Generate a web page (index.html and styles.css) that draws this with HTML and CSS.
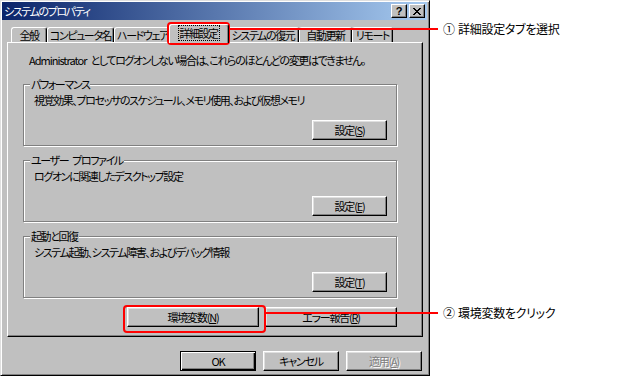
FILE: index.html
```html
<!DOCTYPE html>
<html lang="ja">
<head>
    <meta charset="UTF-8">
    <meta name="viewport" content="width=device-width, initial-scale=1.0">
    <title>システムのプロパティ</title>
    <link rel="stylesheet" href="styles.css">
</head>
<body>
<div class="page">

    <div class="dialog">
        <div class="titlebar">
            <span class="title">システムのプロパティ</span>
            <div class="caption-buttons">
                <span class="caption-btn help">?</span>
                <span class="caption-btn close">
                    <svg width="8" height="7" viewBox="0 0 8 7"><path d="M0 0 L7 7 M1 0 L8 7 M7 0 L0 7 M8 0 L1 7" stroke="#000" stroke-width="1" fill="none"/></svg>
                </span>
            </div>
        </div>

        <div class="tabs">
            <span class="tab tab-general">全般</span>
            <span class="tab tab-computer">コンピュータ名</span>
            <span class="tab tab-hardware">ハードウェア</span>
            <span class="tab tab-advanced selected"><span class="focus">詳細設定</span></span>
            <span class="tab tab-restore">システムの復元</span>
            <span class="tab tab-update">自動更新</span>
            <span class="tab tab-remote">リモート</span>
        </div>

        <div class="panel">
            <p class="note"><span class="latin">Administrator</span> としてログオンしない場合は、これらのほとんどの変更はできません。</p>

            <div class="group">
                <div class="group-title">パフォーマンス</div>
                <p class="group-text">視覚効果、プロセッサのスケジュール、メモリ使用、および仮想メモリ</p>
                <div class="group-actions"><button class="btn">設定(<u>S</u>)</button></div>
            </div>

            <div class="group">
                <div class="group-title">ユーザー プロファイル</div>
                <p class="group-text">ログオンに関連したデスクトップ設定</p>
                <div class="group-actions"><button class="btn">設定(<u>E</u>)</button></div>
            </div>

            <div class="group">
                <div class="group-title">起動と回復</div>
                <p class="group-text">システム起動、システム障害、およびデバッグ情報</p>
                <div class="group-actions"><button class="btn">設定(<u>T</u>)</button></div>
            </div>

            <div class="panel-actions">
                <button class="btn wide">環境変数(<u>N</u>)</button>
                <button class="btn wide">エラー報告(<u>R</u>)</button>
            </div>
        </div>

        <div class="footer">
            <button class="btn default">OK</button>
            <button class="btn">キャンセル</button>
            <button class="btn" disabled>適用(<u>A</u>)</button>
        </div>
    </div>

    <!-- 注釈 -->
    <div class="callout callout-tab">
        <div class="mark"></div>
        <div class="lead"><span class="line"></span><span class="callout-text">① 詳細設定タブを選択</span></div>
    </div>
    <div class="callout callout-env">
        <div class="mark"></div>
        <div class="lead"><span class="line"></span><span class="callout-text">② 環境変数をクリック</span></div>
    </div>

</div>
</body>
</html>
```

FILE: styles.css
```css
body {
    margin: 0;
    background: #fff;
    font-family: "Noto Sans CJK JP", sans-serif;
    font-size: 11px;
    letter-spacing: -1.4px;
    word-spacing: 3px;
    font-feature-settings: "palt" 1;
    color: #000;
}
p {
    margin: 0;
}
.latin {
    letter-spacing: -1px;
}
.page {
    position: relative;
    width: 630px;
    height: 378px;
}

/* ダイアログ */
.dialog {
    box-sizing: border-box;
    width: 430px;
    height: 376px;
    background: #c0c0c0;
    border: 1px solid;
    border-color: #dfdfdf #000 #000 #dfdfdf;
    box-shadow: inset 1px 1px #fff, inset -1px -1px #808080;
    padding: 1px 2px 2px 1px;
    display: flex;
    flex-direction: column;
}
.titlebar {
    height: 18px;
    flex: none;
    display: flex;
    align-items: center;
    justify-content: space-between;
    padding: 0 2px 0 2px;
    background: linear-gradient(to right, #0a246a, #a6caf0);
    color: #fff;
    line-height: 16px;
}
.caption-buttons {
    display: flex;
    gap: 2px;
}
.caption-btn {
    box-sizing: border-box;
    width: 16px;
    height: 14px;
    background: #c0c0c0;
    border: 1px solid;
    border-color: #fff #000 #000 #fff;
    box-shadow: inset -1px -1px #808080;
    display: flex;
    align-items: center;
    justify-content: center;
    color: #000;
    font: bold 11px "Liberation Sans", sans-serif;
    letter-spacing: 0;
}

/* タブ */
.tabs {
    flex: none;
    height: 18px;
    margin-top: 4px;
    padding-left: 9px;
    display: flex;
    align-items: flex-end;
}
.tab {
    box-sizing: border-box;
    height: 15px;
    border: 1px solid;
    border-bottom: 0;
    border-color: #fff #000 transparent #fff;
    border-radius: 3px 3px 0 0;
    box-shadow: inset -1px 0 #808080;
    text-align: center;
    line-height: 14px;
    white-space: nowrap;
    flex: none;
}
.tab-general { width: 36px; }
.tab-computer { width: 67px; }
.tab-hardware { width: 57px; }
.tab-advanced { width: 60px; }
.tab-restore { width: 72px; }
.tab-update { width: 53px; }
.tab-remote { width: 41px; }
.tab.selected {
    position: relative;
    z-index: 1;
    align-self: flex-start;
    height: 19px;
    margin: 0 -2px;
    background: #c0c0c0;
    line-height: 17px;
}
.focus {
    outline: 1px dotted #000;
    outline-offset: -1px;
    padding: 0 2px 0 1px;
}

/* パネル */
.panel {
    box-sizing: border-box;
    margin: 0 4px 0 5px;
    border: 1px solid;
    border-color: #fff #000 #000 #fff;
    box-shadow: inset -1px -1px #808080;
    padding: 9px 25px 9px 15px;
    display: flex;
    flex-direction: column;
}
.note {
    margin-left: 6px;
    line-height: 16px;
    white-space: nowrap;
}
.group {
    box-sizing: border-box;
    height: 62px;
    margin-top: 14px;
    border: 1px solid #808080;
    box-shadow: inset 1px 1px #fff, 1px 1px #fff;
    padding: 0 9px 5px 6px;
    display: flex;
    flex-direction: column;
}
.note + .group {
    margin-top: 16px;
}
.group-title {
    align-self: flex-start;
    margin-top: -9px;
    padding: 0 1px;
    background: #c0c0c0;
    line-height: 16px;
}
.group-text {
    margin-left: 4px;
    line-height: 16px;
    white-space: nowrap;
}
.group-actions {
    margin-top: 12px;
    display: flex;
    justify-content: flex-end;
}
.panel-actions {
    margin-top: 9px;
    display: flex;
    justify-content: flex-end;
    gap: 6px;
}

/* ボタン */
.btn {
    box-sizing: border-box;
    width: 75px;
    height: 20px;
    padding: 0;
    font-family: inherit;
    font-size: 11px;
    letter-spacing: -1.2px;
    font-feature-settings: "palt" 1;
    line-height: 16px;
    color: #000;
    background: #c0c0c0;
    border: 1px solid;
    border-color: #fff #000 #000 #fff;
    box-shadow: inset -1px -1px #808080, inset 1px 1px #dfdfdf;
}
.btn.wide {
    width: 132px;
}
.btn.default {
    border-color: #000;
    box-shadow: inset 1px 1px #fff, inset -1px -1px #000, inset -2px -2px #808080;
}
.btn:disabled {
    color: #808080;
    text-shadow: 1px 1px #fff;
}
.footer {
    margin-top: 14px;
    padding-right: 5px;
    display: flex;
    justify-content: flex-end;
    gap: 7px;
}
.footer .btn {
    width: 76px;
}

/* 注釈 */
.callout {
    position: absolute;
    display: flex;
    align-items: flex-start;
}
.mark {
    box-sizing: border-box;
    border: 2px solid #f00;
    border-radius: 4px;
}
.lead {
    display: flex;
    align-items: center;
    height: 16px;
}
.line {
    height: 2px;
    background: #f00;
}
.callout-text {
    margin-left: 5px;
    font-size: 12px;
    letter-spacing: -0.3px;
    word-spacing: 1px;
    line-height: 16px;
    white-space: nowrap;
}
.callout-tab {
    left: 167px;
    top: 22px;
}
.callout-tab .mark {
    width: 63px;
    height: 23px;
}
.callout-tab .lead {
    margin-top: -1px;
}
.callout-tab .line {
    width: 208px;
}
.callout-env {
    left: 123px;
    top: 305px;
}
.callout-env .mark {
    width: 143px;
    height: 28px;
}
.callout-env .line {
    width: 172px;
}
```
